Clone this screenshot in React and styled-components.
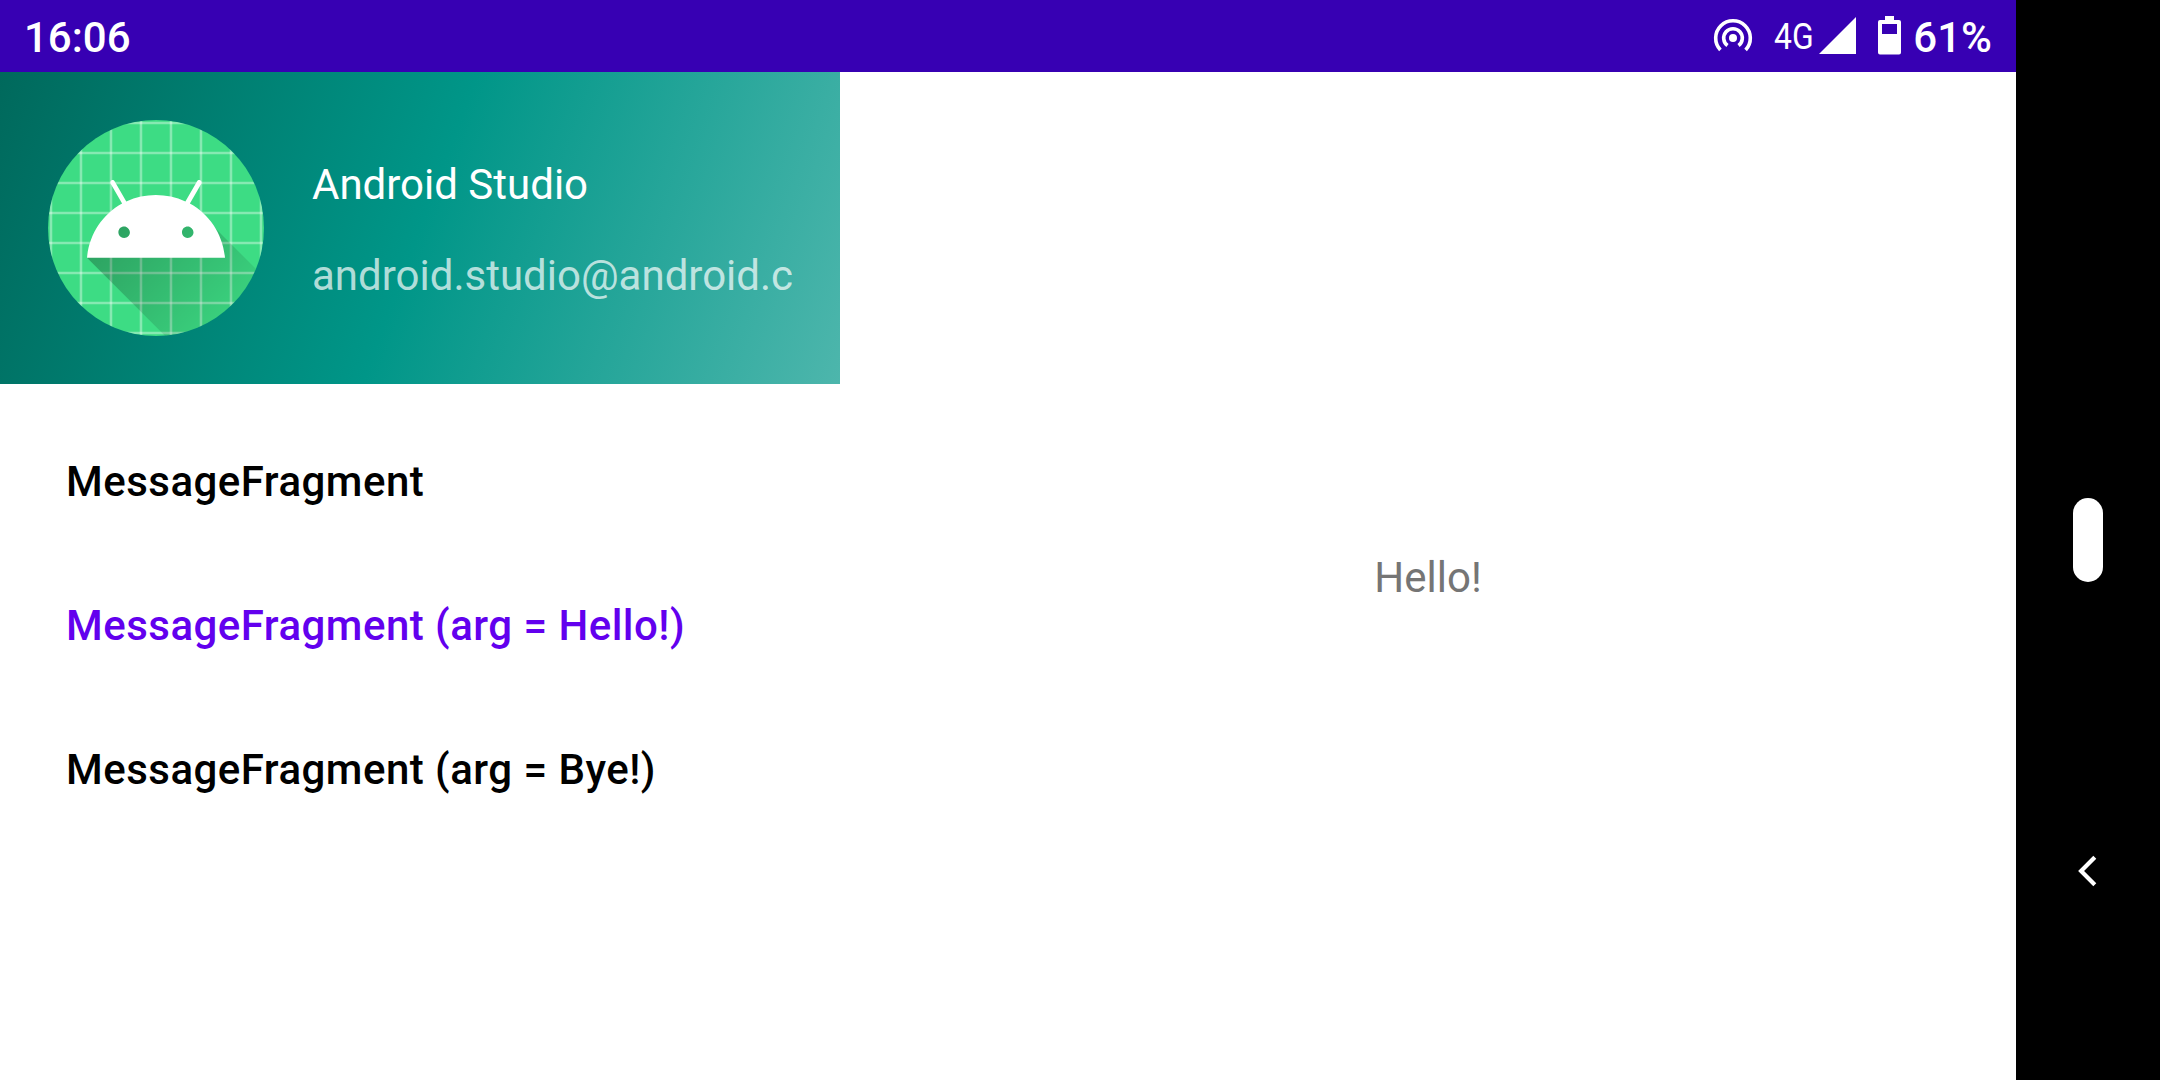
import styled, { createGlobalStyle } from "styled-components";

const GlobalStyle = createGlobalStyle`
  * {
    box-sizing: border-box;
  }

  body {
    margin: 0;
    font-family: Roboto, sans-serif;
    font-size: 42px;
    background: #fff;
  }
`;

const Device = styled.div`
  display: flex;
  width: 2160px;
  height: 1080px;
  overflow: hidden;
`;

const Screen = styled.div`
  display: flex;
  flex-direction: column;
  width: 2016px;
  background: #fff;
`;

const StatusBar = styled.header`
  display: flex;
  align-items: center;
  justify-content: space-between;
  height: 72px;
  padding: 3px 24px 0;
  background: #3700b3;
  color: #fff;
  font-weight: 500;
  line-height: 50px;
`;

const StatusIcons = styled.div`
  display: flex;
  align-items: center;

  svg {
    display: block;
    flex: none;
    margin-bottom: 4px;
  }
`;

const Network = styled.span`
  width: 45px;
  margin: 0 0 2px 21px;
  font-size: 37px;
  font-weight: 400;
  white-space: nowrap;
  transform: scaleX(0.86);
  transform-origin: left center;
`;

const Battery = styled.svg`
  margin-left: 22px;
`;

const Level = styled.span`
  margin-left: 12px;
`;

const Content = styled.main`
  display: flex;
  flex: 1;
`;

const Drawer = styled.aside`
  width: 840px;
`;

const DrawerHeader = styled.div`
  display: flex;
  align-items: center;
  gap: 48px;
  height: 312px;
  padding: 0 48px;
  background: linear-gradient(110.38deg, #00695c, #009688 50%, #4db6ac);

  svg {
    display: block;
    flex: none;
  }
`;

const Account = styled.div`
  display: flex;
  flex-direction: column;
  gap: 41px;
  min-width: 0;
  padding-top: 4px;
  line-height: 50px;
`;

const AccountLine = styled.div`
  overflow: hidden;
  white-space: nowrap;
  color: ${(props) => (props.$muted ? "rgba(255, 255, 255, 0.7)" : "#fff")};
`;

const Menu = styled.nav`
  display: flex;
  flex-direction: column;
  padding-top: 24px;
`;

const MenuItem = styled.a`
  display: flex;
  align-items: center;
  height: 144px;
  padding: 2px 66px 0;
  font-weight: 500;
  letter-spacing: 0.48px;
  white-space: nowrap;
  color: ${(props) => (props.$active ? "#6200ee" : "#000")};
`;

const Message = styled.section`
  display: flex;
  flex: 1;
  align-items: center;
  justify-content: center;
  padding-top: 3px;
  color: #757575;
`;

const NavBar = styled.div`
  display: flex;
  flex-direction: column;
  align-items: center;
  width: 144px;
  padding-top: 498px;
  background: #000;
`;

const HomePill = styled.div`
  width: 30px;
  height: 84px;
  border-radius: 15px;
  background: #fff;
`;

const BackIcon = styled.svg`
  display: block;
  margin-top: 273px;
`;

const GRID = [19, 29, 39, 49, 59, 69, 79, 89];

function AndroidLogo() {
  return (
    <svg width="216" height="216" viewBox="18 18 72 72">
      <defs>
        <clipPath id="round">
          <circle cx="54" cy="54" r="36" />
        </clipPath>
        <linearGradient
          id="shadow"
          gradientUnits="userSpaceOnUse"
          x1="42.9492"
          y1="49.59793"
          x2="85.84757"
          y2="92.4963"
        >
          <stop offset="0" stopColor="#000" stopOpacity="0.267" />
          <stop offset="1" stopColor="#000" stopOpacity="0" />
        </linearGradient>
      </defs>
      <g clipPath="url(#round)">
        <path fill="#3ddc84" d="M0 0h108v108H0z" />
        {GRID.map((n) => (
          <g key={n} stroke="#fff" strokeOpacity="0.38" strokeWidth="0.85">
            <path d={`M${n} 0v108`} />
            <path d={`M0 ${n}h108`} />
          </g>
        ))}
        <path
          fill="url(#shadow)"
          d="M31 63.928c0 0 6.4-11 12.1-13.1c7.2-2.6 26-1.4 26-1.4l38.1 38.1L107 108.928l-32-1L31 63.928z"
        />
      </g>
      <path
        fill="#fff"
        d="M65.3 45.828l3.8-6.6c0.2-0.4 0.1-0.9-0.3-1.1c-0.4-0.2-0.9-0.1-1.1 0.3l-3.9 6.7c-6.3-2.8-13.4-2.8-19.7 0l-3.9-6.7c-0.2-0.4-0.7-0.5-1.1-0.3C38.8 38.328 38.7 38.828 38.9 39.228l3.8 6.6C36.2 49.428 31.7 56.028 31 63.928h46C76.3 56.028 71.8 49.428 65.3 45.828zM43.4 57.328c-0.8 0-1.5-0.5-1.8-1.2c-0.3-0.7-0.1-1.5 0.4-2.1c0.5-0.5 1.4-0.7 2.1-0.4c0.7 0.3 1.2 1 1.2 1.8C45.3 56.528 44.5 57.328 43.4 57.328zM64.6 57.328c-0.8 0-1.5-0.5-1.8-1.2s-0.1-1.5 0.4-2.1c0.5-0.5 1.4-0.7 2.1-0.4c0.7 0.3 1.2 1 1.2 1.8C66.5 56.528 65.6 57.328 64.6 57.328z"
      />
    </svg>
  );
}

function HotspotIcon() {
  return (
    <svg width="40" height="36" viewBox="-20 -20 40 36">
      <circle r="4" fill="#fff" />
      <g fill="none" stroke="#fff" strokeWidth="3.6">
        <path d="M-5.5 7.5A9.3 9.3 0 1 1 5.5 7.5" />
        <path d="M-12.6 11.9A17.3 17.3 0 1 1 12.6 11.9" />
      </g>
    </svg>
  );
}

function SignalIcon() {
  return (
    <svg width="37" height="37" viewBox="0 0 37 37">
      <path d="M37 0v37H0z" fill="#fff" />
    </svg>
  );
}

function BatteryIcon() {
  return (
    <Battery width="23" height="39" viewBox="0 0 23 39">
      <path
        fill="#fff"
        fillRule="evenodd"
        d="M7 0h9v4h5a2 2 0 0 1 2 2v30.500a2 2 0 0 1-2 2H2a2 2 0 0 1-2-2V6a2 2 0 0 1 2-2h5zM4 8v10h15V8z"
      />
    </Battery>
  );
}

const items = [
  { label: "MessageFragment" },
  { label: "MessageFragment (arg = Hello!)", active: true },
  { label: "MessageFragment (arg = Bye!)" },
];

export default function App() {
  return (
    <>
      <GlobalStyle />
      <Device>
        <Screen>
          <StatusBar>
            <span>16:06</span>
            <StatusIcons>
              <HotspotIcon />
              <Network>4G</Network>
              <SignalIcon />
              <BatteryIcon />
              <Level>61%</Level>
            </StatusIcons>
          </StatusBar>
          <Content>
            <Drawer>
              <DrawerHeader>
                <AndroidLogo />
                <Account>
                  <AccountLine>Android Studio</AccountLine>
                  <AccountLine $muted>android.studio@android.c</AccountLine>
                </Account>
              </DrawerHeader>
              <Menu>
                {items.map((item) => (
                  <MenuItem key={item.label} $active={item.active}>
                    {item.label}
                  </MenuItem>
                ))}
              </Menu>
            </Drawer>
            <Message>Hello!</Message>
          </Content>
        </Screen>
        <NavBar>
          <HomePill />
          <BackIcon width="20" height="32" viewBox="0 0 20 32">
            <path
              d="M16.800 2.300L3.100 16l13.700 13.700"
              fill="none"
              stroke="#fff"
              strokeWidth="4.2"
            />
          </BackIcon>
        </NavBar>
      </Device>
    </>
  );
}
